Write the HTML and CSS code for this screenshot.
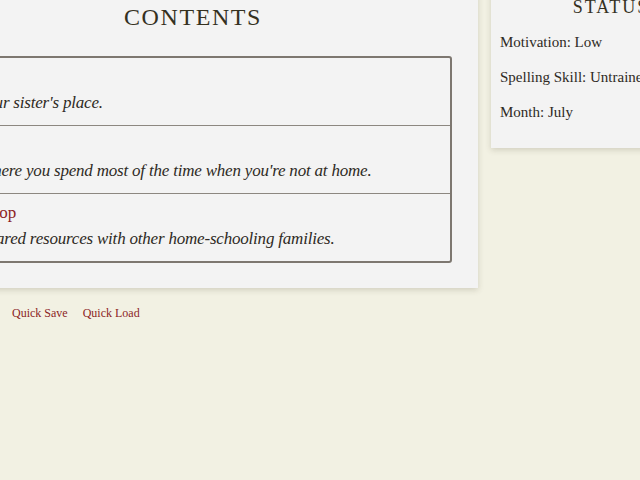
FILE: index.html
```html
<!DOCTYPE html>
<html lang="en">
<head>
<meta charset="utf-8">
<title>Contents</title>
<link rel="stylesheet" href="styles.css">
</head>
<body>
<div class="layout">
  <main class="story">
    <section class="passage">
      <h1 class="passage-title">Contents</h1>
      <ul class="menu">
        <li class="menu-item">
          <a class="menu-link" href="#">Aunt</a>
          <p class="menu-desc">Visit your sister's place.</p>
        </li>
        <li class="menu-item">
          <a class="menu-link" href="#">Park</a>
          <p class="menu-desc">Somewhere you spend most of the time when you're not at home.</p>
        </li>
        <li class="menu-item">
          <a class="menu-link" href="#">My Co-op</a>
          <p class="menu-desc">Pool shared resources with other home-schooling families.</p>
        </li>
      </ul>
    </section>
    <nav class="saves">
      <a class="save-link" href="#">Quick Save</a>
      <a class="save-link" href="#">Quick Load</a>
    </nav>
  </main>
  <aside class="status">
    <h2 class="status-title">Status</h2>
    <p class="status-line">Motivation: Low</p>
    <p class="status-line">Spelling Skill: Untrained</p>
    <p class="status-line">Month: July</p>
  </aside>
</div>
</body>
</html>
```

FILE: styles.css
```css
html, body {
  margin: 0;
  padding: 0;
  overflow: hidden;
}

body {
  background: #f2f1e3;
  color: #2e2a24;
  font-family: "Liberation Serif", "DejaVu Serif", serif;
}

.layout {
  display: flex;
  align-items: flex-start;
  gap: 13px;
  margin: -20px 0 0 -92px;
}

.story {
  flex: 0 0 570px;
}

.passage {
  background: #f3f3f3;
  padding: 23px 26px 25px;
  box-shadow: 0 2px 6px rgba(60, 55, 30, 0.18);
}

.passage-title {
  margin: 0 0 24px;
  font-size: 24px;
  line-height: 29px;
  font-weight: normal;
  text-transform: uppercase;
  letter-spacing: 1.6px;
  text-align: center;
  color: #35311f;
}

.menu {
  list-style: none;
  margin: 0;
  padding: 0;
  border: 2px solid #7d7770;
  border-radius: 3px;
}

.menu-item {
  padding: 6px 16px 9px 10px;
  font-size: 17px;
  line-height: 26px;
}

.menu-item + .menu-item {
  border-top: 1px solid #8c8780;
}

.menu-link {
  display: block;
  color: #8c1f1f;
  text-decoration: none;
}

.menu-desc {
  margin: 0;
  font-style: italic;
  letter-spacing: -0.2px;
  color: #2e2a24;
}

.saves {
  display: flex;
  gap: 15px;
  margin-top: 16px;
  padding-left: 104px;
  font-size: 12px;
  line-height: 18px;
}

.save-link {
  color: #8c1f1f;
  text-decoration: none;
}

.status {
  flex: 0 0 222px;
  background: #f3f3f3;
  padding: 17px 9px 27px;
  box-shadow: 0 2px 6px rgba(60, 55, 30, 0.18);
}

.status-title {
  margin: 0 0 14px;
  font-size: 18px;
  line-height: 21.6px;
  font-weight: normal;
  text-transform: uppercase;
  letter-spacing: 2px;
  text-align: center;
  color: #35311f;
}

.status-line {
  margin: 0 0 17px;
  font-size: 15px;
  line-height: 18px;
  white-space: nowrap;
}

.status-line:last-child {
  margin-bottom: 0;
}
```
